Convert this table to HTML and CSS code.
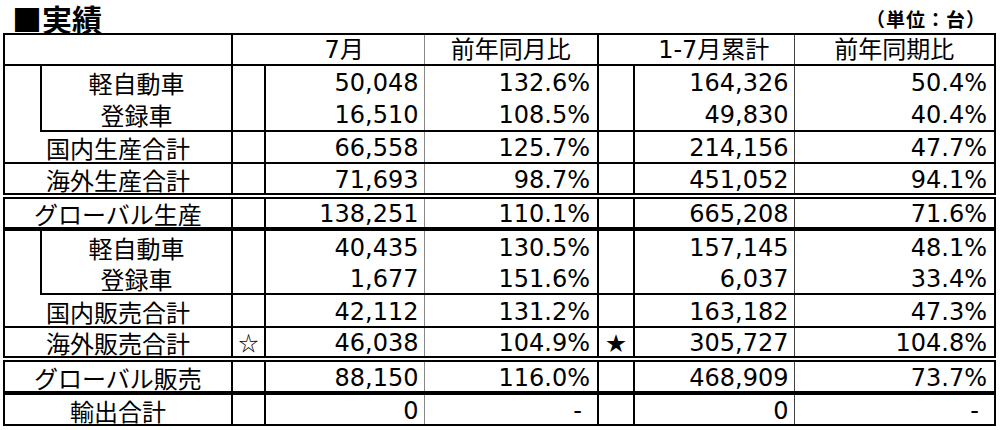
FILE: index.html
```html
<!DOCTYPE html>
<html lang="ja">
<head>
<meta charset="utf-8">
<title>実績</title>
<link rel="stylesheet" href="styles.css">
</head>
<body>
<div class="page">
  <div class="titlebar">
    <h1 class="title">■実績</h1>
    <span class="unit">（単位：台）</span>
  </div>
  <table class="sheet">
    <colgroup>
      <col class="w-indent"><col class="w-label"><col class="w-star"><col class="w-val"><col class="w-pct"><col class="w-star2"><col class="w-val2"><col class="w-pct2">
    </colgroup>
    <thead>
      <tr class="r-head">
        <th colspan="2" class="c-label"></th>
        <th></th>
        <th class="c-val">7月</th>
        <th class="c-pct">前年同月比</th>
        <th></th>
        <th class="c-val2">1-7月累計</th>
        <th class="c-pct2">前年同期比</th>
      </tr>
    </thead>
    <tbody>
      <tr class="r33">
        <td rowspan="2" class="c-indent"></td>
        <td class="c-label sub">軽自動車</td>
        <td class="c-star"></td>
        <td class="c-val num">50,048</td>
        <td class="c-pct num pct">132.6%</td>
        <td class="c-star"></td>
        <td class="c-val2 num">164,326</td>
        <td class="c-pct2 num pct">50.4%</td>
      </tr>
      <tr class="r33 b-thin">
        <td class="c-label sub">登録車</td>
        <td class="c-star"></td>
        <td class="c-val num">16,510</td>
        <td class="c-pct num pct">108.5%</td>
        <td class="c-star"></td>
        <td class="c-val2 num">49,830</td>
        <td class="c-pct2 num pct">40.4%</td>
      </tr>
      <tr class="r32 b-thin">
        <td colspan="2" class="c-label">国内生産合計</td>
        <td class="c-star"></td>
        <td class="c-val num">66,558</td>
        <td class="c-pct num pct">125.7%</td>
        <td class="c-star"></td>
        <td class="c-val2 num">214,156</td>
        <td class="c-pct2 num pct">47.7%</td>
      </tr>
      <tr class="r33 b-double">
        <td colspan="2" class="c-label">海外生産合計</td>
        <td class="c-star"></td>
        <td class="c-val num">71,693</td>
        <td class="c-pct num pct">98.7%</td>
        <td class="c-star"></td>
        <td class="c-val2 num">451,052</td>
        <td class="c-pct2 num pct">94.1%</td>
      </tr>
      <tr class="r33 b-thick">
        <td colspan="2" class="c-label">グローバル生産</td>
        <td class="c-star"></td>
        <td class="c-val num">138,251</td>
        <td class="c-pct num pct">110.1%</td>
        <td class="c-star"></td>
        <td class="c-val2 num">665,208</td>
        <td class="c-pct2 num pct">71.6%</td>
      </tr>
      <tr class="r33">
        <td rowspan="2" class="c-indent"></td>
        <td class="c-label sub">軽自動車</td>
        <td class="c-star"></td>
        <td class="c-val num">40,435</td>
        <td class="c-pct num pct">130.5%</td>
        <td class="c-star"></td>
        <td class="c-val2 num">157,145</td>
        <td class="c-pct2 num pct">48.1%</td>
      </tr>
      <tr class="r32 b-thin">
        <td class="c-label sub">登録車</td>
        <td class="c-star"></td>
        <td class="c-val num">1,677</td>
        <td class="c-pct num pct">151.6%</td>
        <td class="c-star"></td>
        <td class="c-val2 num">6,037</td>
        <td class="c-pct2 num pct">33.4%</td>
      </tr>
      <tr class="r33 b-thin">
        <td colspan="2" class="c-label">国内販売合計</td>
        <td class="c-star"></td>
        <td class="c-val num">42,112</td>
        <td class="c-pct num pct">131.2%</td>
        <td class="c-star"></td>
        <td class="c-val2 num">163,182</td>
        <td class="c-pct2 num pct">47.3%</td>
      </tr>
      <tr class="r32 b-double">
        <td colspan="2" class="c-label">海外販売合計</td>
        <td class="c-star mark">☆</td>
        <td class="c-val num">46,038</td>
        <td class="c-pct num pct">104.9%</td>
        <td class="c-star mark">★</td>
        <td class="c-val2 num">305,727</td>
        <td class="c-pct2 num pct">104.8%</td>
      </tr>
      <tr class="r34 b-thick">
        <td colspan="2" class="c-label">グローバル販売</td>
        <td class="c-star"></td>
        <td class="c-val num">88,150</td>
        <td class="c-pct num pct">116.0%</td>
        <td class="c-star"></td>
        <td class="c-val2 num">468,909</td>
        <td class="c-pct2 num pct">73.7%</td>
      </tr>
      <tr class="r32">
        <td colspan="2" class="c-label">輸出合計</td>
        <td class="c-star"></td>
        <td class="c-val num">0</td>
        <td class="c-pct num dash">-</td>
        <td class="c-star"></td>
        <td class="c-val2 num">0</td>
        <td class="c-pct2 num dash">-</td>
      </tr>
    </tbody>
  </table>
</div>
</body>
</html>
```

FILE: styles.css
```css
html, body {
  margin: 0;
  padding: 0;
  background: #ffffff;
}

body {
  font-family: "DejaVu Sans", "Noto Sans CJK JP", sans-serif;
  color: #000;
}

.page {
  width: 1000px;
  height: 430px;
  overflow: hidden;
}

.titlebar {
  display: flex;
  justify-content: space-between;
  align-items: flex-end;
  height: 33px;
  padding: 0 14px 0 12px;
  box-sizing: border-box;
}

.title {
  margin: 0;
  font-family: "Noto Sans CJK JP", sans-serif;
  font-weight: 700;
  font-size: 30px;
  line-height: 30px;
}

.unit {
  font-family: "Noto Sans CJK JP", sans-serif;
  font-weight: 700;
  font-size: 19px;
  line-height: 19px;
  letter-spacing: 1px;
  margin-bottom: 5px;
}

.sheet {
  border-collapse: collapse;
  table-layout: fixed;
  width: 993px;
  margin-left: 3px;
  border: 2px solid #000;
}

.w-indent { width: 37px; }
.w-label { width: 191px; }
.w-star { width: 33px; }
.w-val { width: 159px; }
.w-pct { width: 174px; }
.w-star2 { width: 36px; }
.w-val2 { width: 160px; }
.w-pct2 { width: 201px; }

.sheet th,
.sheet td {
  padding: 0;
  font-size: 24px;
  line-height: 24px;
  font-weight: 400;
  white-space: nowrap;
  vertical-align: middle;
}

.sheet td {
  padding-top: 2px;
}

.sheet th {
  text-align: center;
  font-family: "DejaVu Sans", "Noto Sans CJK JP", sans-serif;
  border-bottom: 2px solid #000;
}

.r-head { height: 31px; }
.r32 { height: 32px; }
.r33 { height: 33px; }
.r34 { height: 34px; }

.c-label {
  text-align: center;
  font-family: "Noto Sans CJK JP", sans-serif;
  border-right: 2px solid #000;
}

.c-label.sub {
  border-left: 2px solid #000;
}

.c-star { border-right: 2px solid #000; }
.c-val { border-right: 1px solid #888; }
.c-pct { border-right: 2px solid #000; }
.c-val2 { border-right: 1px solid #444; }

.num {
  text-align: right;
  padding-right: 5px !important;
}

.pct {
  padding-right: 7px !important;
}

.dash {
  padding-right: 15px !important;
}

.mark {
  text-align: center;
  font-family: "Noto Sans CJK JP", sans-serif;
  font-size: 20px !important;
}

.b-thin > td { border-bottom: 2px solid #000; }
.b-double > td { border-bottom: 6px double #000; }
.b-thick > td { border-bottom: 4px solid #000; }
```
